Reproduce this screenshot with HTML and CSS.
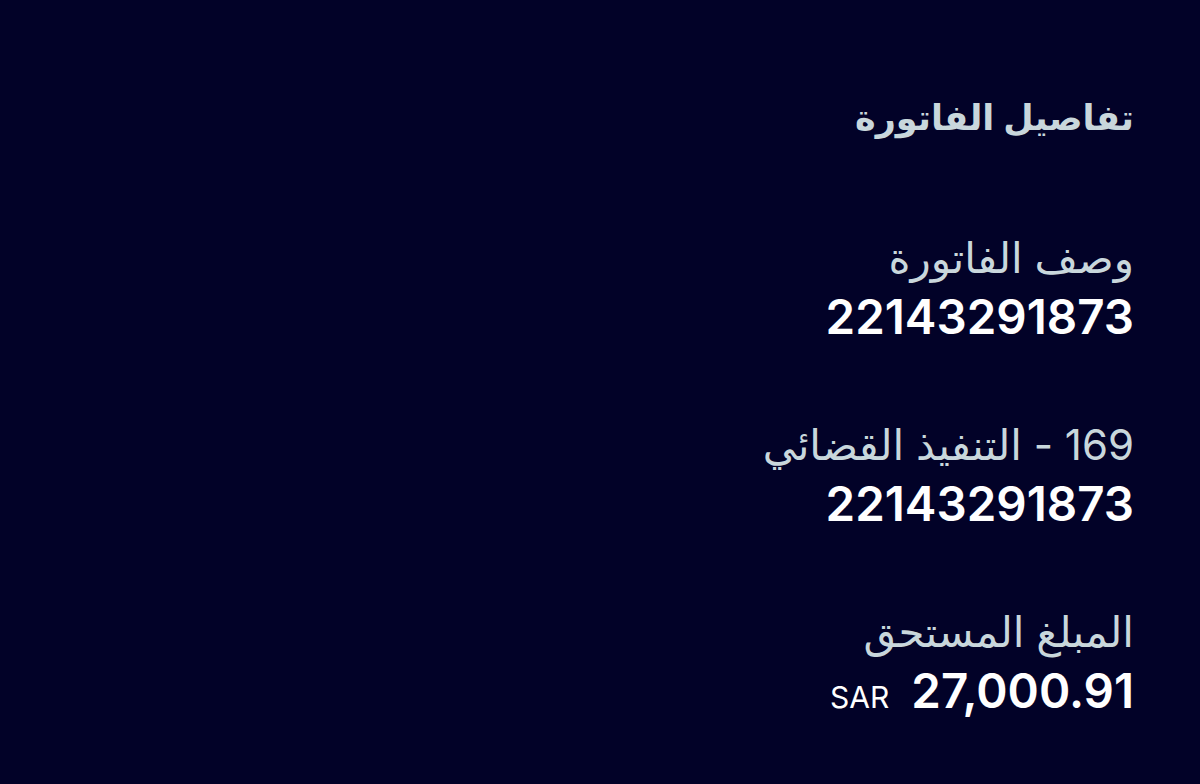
FILE: index.html
```html
<!DOCTYPE html>
<html lang="ar" dir="rtl">
<head>
	<meta charset="utf-8">
	<title>تفاصيل الفاتورة</title>
	<link rel="stylesheet" href="styles.css">
</head>
<body>
	<div class="page">
		<h2 class="title">تفاصيل الفاتورة</h2>

		<div class="item">
			<div class="label">وصف الفاتورة</div>
			<div class="value">22143291873</div>
		</div>

		<div class="item">
			<div class="label">169 - التنفيذ القضائي</div>
			<div class="value">22143291873</div>
		</div>

		<div class="item">
			<div class="label">المبلغ المستحق</div>
			<div class="value amount">
				<span class="currency">SAR</span>
				<span>27,000.91</span>
			</div>
		</div>
	</div>
</body>
</html>
```

FILE: styles.css
```css
body {
	margin: 0;
	padding: 0;
	background-color: #020228;
	font-family: Inter, "DejaVu Sans", sans-serif;
	color: #c9d7dc;
}

.page {
	padding: 92px 66px 0 66px;
	display: flex;
	flex-direction: column;
	gap: 70px;
}

.title {
	margin: 0 0 18px 0;
	font-size: 35px;
	font-weight: 600;
	line-height: 50px;
	color: #c9d7dc;
}

.item {
	display: flex;
	flex-direction: column;
	gap: 1px;
}

.label {
	font-size: 42px;
	line-height: 56px;
}

.value {
	font-size: 47.5px;
	font-weight: 600;
	line-height: 60px;
	color: #ffffff;
}

.amount {
	direction: ltr;
	display: flex;
	justify-content: flex-end;
	align-items: baseline;
	gap: 22px;
}

.currency {
	font-size: 30px;
	font-weight: 400;
}
```
